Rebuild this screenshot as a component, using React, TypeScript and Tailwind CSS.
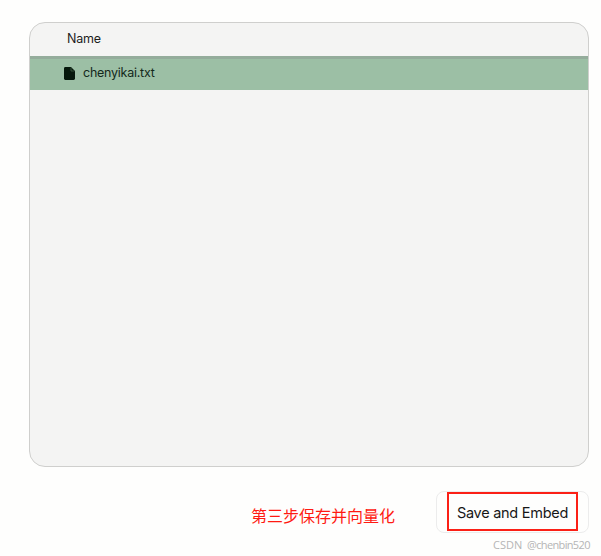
const files = [{ name: 'chenyikai.txt', selected: true }];

function FileIcon() {
  return (
    <svg
      aria-hidden="true"
      className="h-[13px] w-[11px] shrink-0"
      viewBox="0 0 11 13"
      xmlns="http://www.w3.org/2000/svg">
      <path
        fill="#06180c"
        d="M1.4 0H7l4 4v7.6c0 .8-.6 1.4-1.4 1.4H1.4C.6 13 0 12.400 0 11.600V1.400C0 .6.6 0 1.400 0z"></path>
      <path fill="none" stroke="#48684f" strokeWidth=".7" d="M7 .6V4h3.400"></path>
    </svg>
  );
}

function FileList() {
  return (
    <div className="h-[445px] w-[560px] overflow-hidden rounded-2xl border border-[#cfcfcd] bg-[#f4f4f3] text-[12.5px] tracking-[-0.25px] text-[#1c1c1c]">
      <div className="flex h-[33px] items-center pl-[37px]">
        <p>Name</p>
      </div>
      {files.map((file) => (
        <div
          key={file.name}
          className="flex h-[34px] items-center border-t-3 border-[#94ac9b] bg-[#9cbfa5] pb-[2px] pl-[34px] text-[#14291b]">
          <FileIcon />
          <p className="ml-2">{file.name}</p>
        </div>
      ))}
    </div>
  );
}

export default function App() {
  return (
    <div className="h-[556px] w-[601px] overflow-hidden bg-[#fefefd] pl-[29px] pt-[22px] font-['Inter',sans-serif]">
      <FileList />

      <div className="mt-6 flex w-[560px] items-center justify-end">
        <p className="mr-[41px] mt-[5px] font-['Noto_Sans_CJK_SC',sans-serif] text-[16px] leading-6 text-[#ff1a12]">
          第三步保存并向量化
        </p>
        <div className="flex h-[42px] w-[153px] items-start rounded-lg border border-[#ececec] pl-[10px]">
          <button className="h-[39px] w-[131px] whitespace-nowrap border-2 border-[#fb2016] pt-[2px] font-['Inter',sans-serif] text-[14.500px] tracking-[-0.27px] text-[#171717]">
            Save and Embed
          </button>
        </div>
      </div>

      <p className="ml-[464px] mt-[4px] flex font-['Open_Sans',sans-serif] text-[11px] leading-4 text-[#b5b5b5]">
        <span className="w-[34px]">CSDN</span>
        <span className="tracking-[-0.65px]">@chenbin520</span>
      </p>
    </div>
  );
}
